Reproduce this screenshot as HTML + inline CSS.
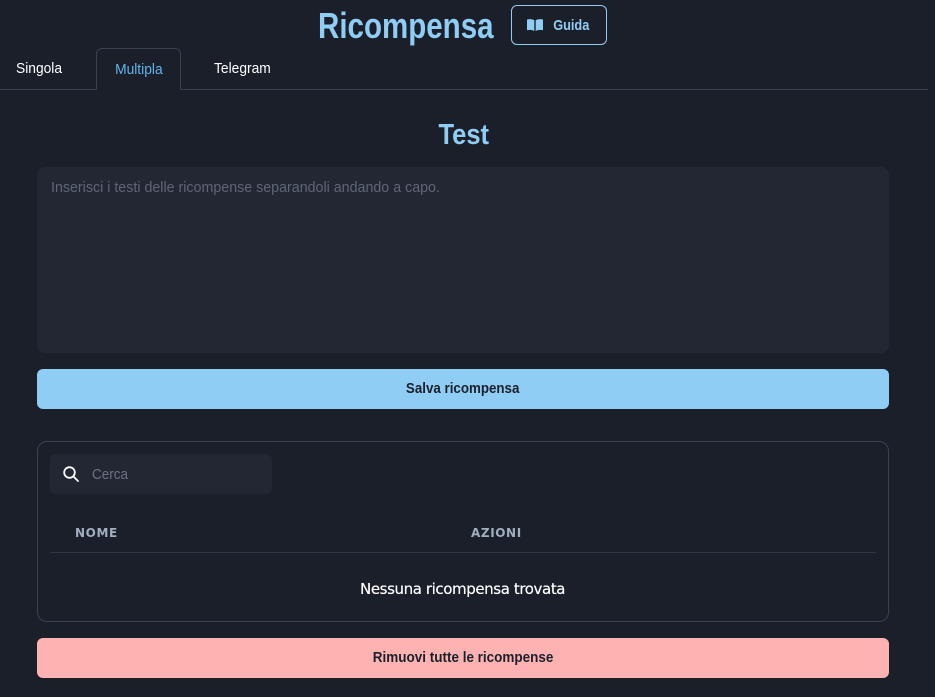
<!DOCTYPE html>
<html><head><meta charset="utf-8"><style>
*{box-sizing:border-box;margin:0;padding:0}
body{width:935px;height:697px;background:#1b1f2a;font-family:"Liberation Sans",sans-serif;color:#fff;position:relative;overflow:hidden}
.abs{position:absolute}
.c{display:inline-block;transform-origin:left center}
.cc{display:inline-block;transform-origin:center center}
h1{position:absolute;left:318px;top:5px;font-size:36px;font-weight:bold;color:#90cdf4;white-space:nowrap}
.guida{left:511px;top:5px;width:96px;height:40px;border:1px solid #90cdf4;border-radius:6px;color:#90cdf4;font-weight:bold;font-size:15px;display:flex;align-items:center;justify-content:center;gap:6px}
.tabline{left:0;top:89px;width:928px;height:1px;background:#3a4150}
.tab{top:60px;font-size:15px;white-space:nowrap}
.tabact{left:96px;top:48px;width:85px;height:42px;border:1px solid #3a4150;border-bottom:1px solid #1b1f2a;border-radius:6px 6px 0 0;background:#1b1f2a;color:#63b3ed;font-size:15px;text-align:center;padding-top:12px}
h2{position:absolute;left:0;width:928px;text-align:center;top:119px;font-size:29px;color:#90cdf4;font-weight:bold}
.ta{left:37px;top:167px;width:852px;height:186px;background:#222733;border-radius:8px;color:#5f6675;font-size:15px;padding:12px 14px;white-space:nowrap}
.btn{left:37px;width:852px;height:40px;border-radius:6px;color:#1a202c;font-weight:bold;font-size:14.5px;display:flex;align-items:center;justify-content:center}
.box{left:37px;top:441px;width:852px;height:181px;border:1px solid #3a4150;border-radius:10px}
.search{left:50px;top:454px;width:222px;height:40px;background:#222733;border-radius:6px}
.th{top:526px;font-size:12px;font-weight:bold;color:#a0aec0;letter-spacing:0.6px;font-family:"DejaVu Sans",sans-serif}
</style></head><body>
<h1><span class="c" style="transform:scaleX(0.82)">Ricompensa</span></h1>
<div class="abs guida"><svg width="18" height="14" viewBox="0 0 18 14"><path d="M1 1.5C3.5 0.8 6 1 8.3 2.2V13C6 11.8 3.5 11.6 1 12.3Z M17 1.5C14.5 0.8 12 1 9.7 2.2V13C12 11.8 14.5 11.6 17 12.3Z" fill="#90cdf4"/></svg><span class="cc" style="transform:scaleX(0.85)">Guida</span></div>
<div class="abs tabline"></div>
<div class="abs tab" style="left:16px"><span class="c" style="transform:scaleX(0.92)">Singola</span></div>
<div class="abs tabact"><span class="cc" style="transform:scaleX(0.92)">Multipla</span></div>
<div class="abs tab" style="left:214px"><span class="c" style="transform:scaleX(0.92)">Telegram</span></div>
<h2><span class="cc" style="transform:scaleX(0.88)">Test</span></h2>
<div class="abs ta"><span class="c" style="transform:scaleX(0.95)">Inserisci i testi delle ricompense separandoli andando a capo.</span></div>
<div class="abs btn" style="top:369px;background:#90cdf4"><span class="cc" style="transform:scaleX(0.92)">Salva ricompensa</span></div>
<div class="abs box"></div>
<div class="abs search"><svg class="abs" style="left:12px;top:11px" width="18" height="18" viewBox="0 0 18 18"><circle cx="7.5" cy="7.5" r="5.3" stroke="#fff" stroke-width="1.8" fill="none"/><path d="M11.5 11.5L16 16" stroke="#fff" stroke-width="1.8" stroke-linecap="round"/></svg><span class="abs" style="left:42px;top:12px;color:#6b7280;font-size:15px"><span class="c" style="transform:scaleX(0.9)">Cerca</span></span></div>
<div class="abs th" style="left:75px">NOME</div>
<div class="abs th" style="left:471px">AZIONI</div>
<div class="abs" style="left:50px;top:552px;width:826px;height:1px;background:#2f3644"></div>
<div class="abs" style="left:360px;top:580px;font-size:15px;font-family:'DejaVu Sans',sans-serif;letter-spacing:-0.4px;white-space:nowrap;text-shadow:0 0 0.4px #fff">Nessuna ricompensa trovata</div>
<div class="abs btn" style="top:638px;background:#feb2b2"><span class="cc" style="transform:scaleX(0.93)">Rimuovi tutte le ricompense</span></div>
</body></html>
